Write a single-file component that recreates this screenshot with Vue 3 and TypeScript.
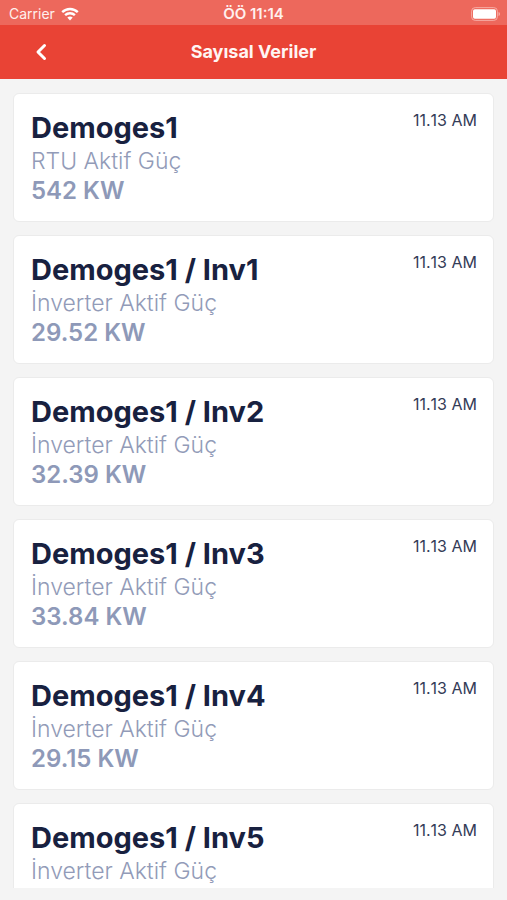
<script setup lang="ts">
interface Reading {
  name: string
  label: string
  value: string
  time: string
}

const inverter = (index: number, value: string): Reading => ({
  name: `Demoges1 / Inv${index}`,
  label: 'İnverter Aktif Güç',
  value,
  time: '11.13 AM',
})

const readings: Reading[] = [
  { name: 'Demoges1', label: 'RTU Aktif Güç', value: '542 KW', time: '11.13 AM' },
  inverter(1, '29.52 KW'),
  inverter(2, '32.39 KW'),
  inverter(3, '33.84 KW'),
  inverter(4, '29.15 KW'),
  inverter(5, ''),
]
</script>

<template>
  <div class="screen">
    <div class="status">
      <div class="carrier">
        <span>Carrier</span>
        <svg class="wifi" viewBox="0 0 18 14" aria-hidden="true">
          <path d="M1.2 5.2C5.6.9 12.4.9 16.8 5.2" />
          <path d="M4.1 8.2c2.8-2.7 7-2.7 9.8 0" />
          <path class="dot" d="M6.3 10.6c1.6-1.5 3.8-1.5 5.4 0L9 13.4z" />
        </svg>
      </div>
      <span class="clock">ÖÖ 11:14</span>
      <svg class="battery" viewBox="0 0 30 14" aria-hidden="true">
        <rect class="shell" x=".6" y=".6" width="25.8" height="12.8" rx="3.6" />
        <rect class="charge" x="2" y="2.2" width="23" height="9.6" rx="1.8" />
        <path class="cap" d="M27.5 5c2 .6 2 3.4 0 4z" />
      </svg>
    </div>

    <header class="bar">
      <button class="back" type="button" aria-label="Geri">
        <svg viewBox="0 0 12 18" aria-hidden="true"><path d="M9.5 2.5 3 9 9.500 15.5" /></svg>
      </button>
      <h1>Sayısal Veriler</h1>
    </header>

    <main class="list">
      <article v-for="item in readings" :key="item.name" class="card">
        <div class="info">
          <h2>{{ item.name }}</h2>
          <p>{{ item.label }}</p>
          <strong>{{ item.value }}</strong>
        </div>
        <time>{{ item.time }}</time>
      </article>
    </main>
  </div>
</template>

<style>
body {
  background: #f4f4f4;
}
</style>

<style scoped>
.screen {
  box-sizing: border-box;
  display: flex;
  flex-direction: column;
  height: 100vh;
  padding-bottom: 12px;
  background: #f4f4f4;
  font-family: Inter, "Liberation Sans", sans-serif;
}

.status {
  display: grid;
  grid-template-columns: 1fr auto 1fr;
  align-items: center;
  flex: none;
  height: 25px;
  padding: 2px 6px 0;
  box-sizing: border-box;
  background: #ed685c;
  color: #fff0ee;
  font-size: 14px;
  line-height: 20px;
}

.carrier {
  display: flex;
  align-items: center;
  gap: 6px;
  padding-left: 3px;
}

.wifi {
  width: 18px;
  height: 14px;
  fill: none;
  stroke: #fff;
  stroke-width: 2.4;
}

.wifi .dot {
  fill: #fff;
  stroke: none;
}

.clock {
  font-size: 15px;
  font-weight: 600;
  font-kerning: none;
}

.battery {
  justify-self: end;
  width: 30px;
  height: 14px;
}

.shell {
  fill: none;
  stroke: #f6aaa3;
}

.charge {
  fill: #fff;
}

.cap {
  fill: #f6aaa3;
}

.bar {
  display: grid;
  grid-template-columns: 34px 1fr 34px;
  align-items: center;
  flex: none;
  height: 54px;
  padding: 0 24px;
  background: #e94335;
}

.back {
  display: flex;
  justify-content: center;
  padding: 4px 0;
  border: 0;
  background: none;
}

.back svg {
  width: 12px;
  height: 18px;
  fill: none;
  stroke: #fff;
  stroke-width: 3;
  stroke-linecap: round;
  stroke-linejoin: round;
}

h1 {
  margin: 0;
  color: #fff5f3;
  font-size: 18px;
  font-weight: 700;
  line-height: 24px;
  text-align: center;
}

.list {
  display: flex;
  flex: 1;
  flex-direction: column;
  gap: 13px;
  min-height: 0;
  padding: 14px 13px 0;
  overflow: hidden;
}

.card {
  display: flex;
  flex: none;
  justify-content: space-between;
  box-sizing: border-box;
  height: 129px;
  padding: 16px 16px 0 17px;
  border: 1px solid #ebebeb;
  border-radius: 6px;
  background: #fff;
}

h2,
p {
  margin: 0;
}

h2 {
  color: #182140;
  font-size: 29px;
  font-weight: 700;
  line-height: 36px;
}

p {
  color: #929bb8;
  font-size: 23px;
  font-weight: 300;
  line-height: 30px;
}

strong {
  display: block;
  color: #8e99b8;
  font-size: 24px;
  font-weight: 600;
  line-height: 29px;
}

time {
  color: #343b57;
  font-size: 16px;
  font-kerning: none;
  line-height: 20px;
}
</style>
